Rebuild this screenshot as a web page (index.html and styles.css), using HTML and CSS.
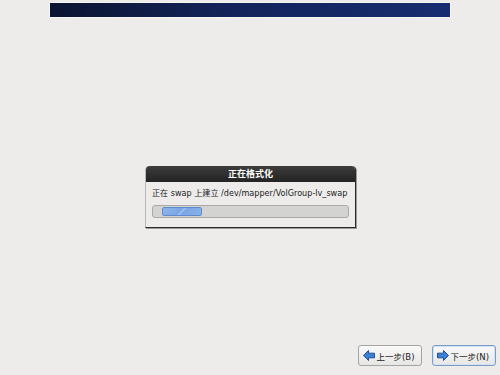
FILE: index.html
```html
<!DOCTYPE html>
<html lang="zh-CN">
<head>
  <meta charset="UTF-8" />
  <title>正在格式化</title>
  <link rel="stylesheet" href="styles.css">
</head>
<body>
  <div class="page">
    <div class="header-bar"></div>

    <div class="main">
      <div class="dialog">
        <div class="dialog-title">正在格式化</div>
        <div class="dialog-body">
          <p class="dialog-text">正在 swap 上建立 /dev/mapper/VolGroup-lv_swap</p>
          <div class="progress">
            <div class="progress-fill"></div>
          </div>
        </div>
      </div>
    </div>

    <div class="footer">
      <button class="nav-button">
        <svg class="arrow" width="12" height="11" viewBox="0 0 12 11">
          <path d="M0.5 5.5 L5.5 0.5 V3.2 H11.5 V7.8 H5.5 V10.5 Z" fill="#3d7fd4" stroke="#1f4f99" stroke-width="1"/>
        </svg>
        上一步(B)
      </button>
      <button class="nav-button default">
        <svg class="arrow" width="12" height="11" viewBox="0 0 12 11">
          <path d="M11.5 5.5 L6.5 0.5 V3.2 H0.5 V7.8 H6.5 V10.5 Z" fill="#3d7fd4" stroke="#1f4f99" stroke-width="1"/>
        </svg>
        下一步(N)
      </button>
    </div>
  </div>
</body>
</html>
```

FILE: styles.css
```css
* {
  margin: 0;
  padding: 0;
  box-sizing: border-box;
}

body {
  font-family: 'DejaVu Sans', 'Noto Sans CJK SC', sans-serif;
  background: #edeceb;
  width: 500px;
  height: 375px;
  overflow: hidden;
}

.page {
  height: 375px;
  display: flex;
  flex-direction: column;
}

/* Barra superior azul */
.header-bar {
  width: 402px;
  height: 16px;
  margin: 2px auto 0;
  border: 1px solid #f6f6f6;
  background: linear-gradient(to right, #0b1431, #13235a 45%, #182d70);
}

.main {
  flex: 1;
  display: flex;
  justify-content: center;
  align-items: flex-start;
  padding-top: 148px;
}

.dialog {
  width: 211px;
  margin-left: 1px;
  background: #edeceb;
  border: 1px solid #2a2a2a;
  border-left-color: #b8b8b8;
  border-top: none;
  border-radius: 4px 4px 0 0;
  box-shadow: 1px 1px 0 #9a9a9a;
}

.dialog-title {
  height: 16px;
  background: linear-gradient(to bottom, #3c3c3c, #232323);
  border-radius: 4px 4px 0 0;
  color: #ffffff;
  font-size: 9px;
  font-weight: bold;
  text-align: center;
  line-height: 16px;
}

.dialog-body {
  padding: 6px 6px 9px 6px;
}

.dialog-text {
  font-size: 8.1px;
  color: #222222;
  white-space: nowrap;
  line-height: 11px;
}

.progress {
  margin-top: 6px;
  height: 13px;
  border: 1px solid #a9a9a9;
  border-radius: 3px;
  background: #d3d3d1;
  padding: 1px 0 1px 9px;
}

.progress-fill {
  width: 40px;
  height: 100%;
  border: 1px solid #5c8ccf;
  border-radius: 2px;
  background: linear-gradient(135deg, #8fb6ea 0%, #7aa6e4 45%, #a5c4ee 50%, #7aa6e4 55%, #8cb3e8 100%);
}

.footer {
  display: flex;
  justify-content: flex-end;
  gap: 10px;
  padding: 0 4px 9px 0;
}

.nav-button {
  height: 21px;
  padding: 0 6px 0 4px;
  display: flex;
  align-items: center;
  gap: 2px;
  font-family: 'DejaVu Sans', 'Noto Sans CJK SC', sans-serif;
  font-size: 8.5px;
  color: #222222;
  background: linear-gradient(to bottom, #fafafa, #e6e6e4);
  border: 1px solid #a4a4a2;
  border-radius: 3px;
}

.nav-button.default {
  border-color: #7a9cc9;
  box-shadow: inset 0 0 0 1px #d5e2f3;
}

.arrow {
  display: block;
}
```
